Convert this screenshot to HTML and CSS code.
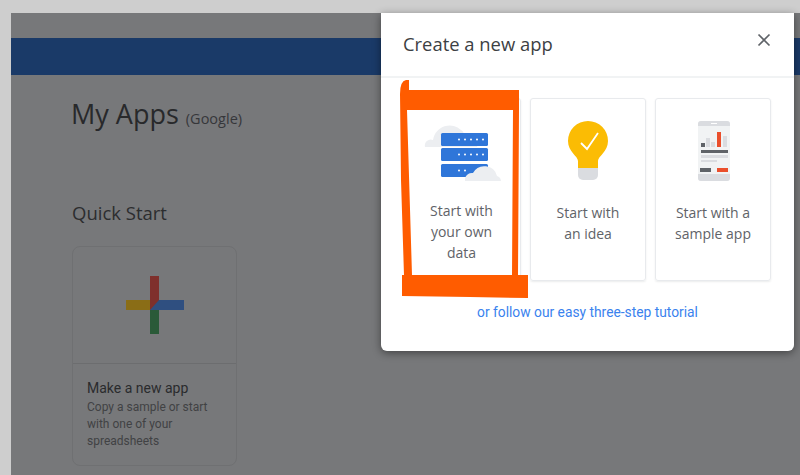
FILE: index.html
```html
<!DOCTYPE html>
<html lang="en">
<head>
  <meta charset="UTF-8" />
  <title>My Apps</title>
  <link rel="stylesheet" href="styles.css">
</head>
<body>
  <div class="app">
    <div class="topgap"></div>
    <div class="band"></div>
    <main class="content">
      <h1 class="page-title">My Apps <small>(Google)</small></h1>
      <h2 class="section-title">Quick Start</h2>
      <div class="new-card">
        <div class="new-card-top">
          <svg width="58" height="58" viewBox="0 0 58 58">
            <rect x="24" y="0" width="9" height="34" fill="#7f302c" />
            <rect x="0" y="24" width="24" height="10" fill="#8a6d16" />
            <rect x="24" y="34" width="9" height="24" fill="#2a5a38" />
            <polygon points="24,34 33,24 58,24 58,34" fill="#2f4f80" />
          </svg>
        </div>
        <div class="new-card-body">
          <div class="new-card-title">Make a new app</div>
          <div class="new-card-text">Copy a sample or start with one of your spreadsheets</div>
        </div>
      </div>
    </main>

    <div class="dialog">
      <div class="dialog-head">
        <span class="dialog-title">Create a new app</span>
        <svg class="close-icon" width="14" height="14" viewBox="0 0 14 14">
          <path d="M1.5 1.5 L12.5 12.5 M12.5 1.5 L1.5 12.5" stroke="#5f6368" stroke-width="1.7" fill="none" />
        </svg>
      </div>
      <div class="options">
        <div class="option option-first">
          <svg class="option-icon" width="80" height="64" viewBox="2 0 80 64">
            <path d="M4 26 a6 6 0 0 1 8 -7 a17 17 0 0 1 32 -5 a9 9 0 0 1 12 12 z" fill="#eceef1" />
            <rect x="20" y="12" width="47" height="13" rx="1.5" fill="#2f76d9" />
            <rect x="20" y="27" width="47" height="13" rx="1.5" fill="#2f76d9" />
            <rect x="20" y="43" width="47" height="13" rx="1.5" fill="#2f76d9" />
            <g fill="#fff">
              <circle cx="38" cy="18.500" r="1" /><circle cx="44" cy="18.500" r="1" /><circle cx="50" cy="18.500" r="1" /><circle cx="56" cy="18.500" r="1" /><circle cx="62" cy="18.500" r="1" />
              <circle cx="38" cy="33.500" r="1" /><circle cx="44" cy="33.500" r="1" /><circle cx="50" cy="33.500" r="1" /><circle cx="56" cy="33.500" r="1" /><circle cx="62" cy="33.500" r="1" />
              <circle cx="38" cy="49.500" r="1" /><circle cx="44" cy="49.500" r="1" />
            </g>
            <path d="M44 60 a7 7 0 0 1 8 -8 a13 13 0 0 1 24 3 a6 6 0 0 1 4 5 z" fill="#eceef1" />
          </svg>
          <div class="option-label">Start with your own data</div>
        </div>
        <div class="option">
          <svg class="option-icon" width="80" height="64" viewBox="0 0 80 64">
            <path d="M30 47 L30 40 C30 35 20 31 20 20 A20 20 0 0 1 60 20 C60 31 50 35 50 40 L50 47 z" fill="#fbbc04" />
            <path d="M30 47 h20 v7 a5 5 0 0 1 -5 5 h-10 a5 5 0 0 1 -5 -5 z" fill="#dadce0" />
            <path d="M33 22 L39 28 L50 12" stroke="#fff" stroke-width="1.800" fill="none" />
          </svg>
          <div class="option-label">Start with an idea</div>
        </div>
        <div class="option">
          <svg class="option-icon" width="80" height="64" viewBox="-1 0 80 64">
            <rect x="24" y="0" width="32" height="60" rx="3" fill="#f1f3f4" />
            <path d="M24 5 v-2 a3 3 0 0 1 3 -3 h26 a3 3 0 0 1 3 3 v2 z M24 53 h32 v4 a3 3 0 0 1 -3 3 h-26 a3 3 0 0 1 -3 -3 z" fill="#dadce0" />
            <rect x="37" y="2" width="6" height="1" fill="#fff" />
            <rect x="27" y="22" width="4" height="4" fill="#5f6368" />
            <rect x="32" y="17" width="4" height="9" fill="#dadce0" />
            <rect x="37" y="21" width="4" height="5" fill="#dadce0" />
            <rect x="43" y="11" width="4" height="15" fill="#ea4f2c" />
            <rect x="49" y="15" width="4" height="11" fill="#dadce0" />
            <rect x="27" y="29" width="27" height="3" fill="#5f6368" />
            <rect x="27" y="34" width="27" height="3" fill="#dadce0" />
            <rect x="27" y="39" width="16" height="2" fill="#dadce0" />
            <rect x="26" y="47" width="11" height="4" fill="#5f6368" />
            <rect x="43" y="47" width="11" height="4" fill="#ea4f2c" />
          </svg>
          <div class="option-label">Start with a sample app</div>
        </div>
      </div>
      <a class="tutorial-link" href="#">or follow our easy three-step tutorial</a>
    </div>

    <svg class="scribble" width="130" height="220" viewBox="0 0 130 220">
      <path d="M0 14 Q0 1 6 0 H9 V10 H119 V30 L118 195 H128 V218 L70 217 L2 216 V195 H4 L1 100 z M7 30 L12 195 L112 195 L113 30 z" fill="#ff5c00" fill-rule="evenodd" />
    </svg>
  </div>
</body>
</html>
```

FILE: styles.css
```css
body {
  margin: 0;
  height: 475px;
  padding: 13px 0 0 11px;
  box-sizing: border-box;
  overflow: hidden;
  background-color: #cecece;
  font-family: "Roboto", sans-serif;
}

.app {
  position: relative;
  height: 462px;
  background-color: #77787a;
}

.topgap {
  height: 25px;
}

.band {
  height: 37px;
  background-color: #1a3a68;
}

.content {
  padding: 23px 0 0 60px;
}

.page-title {
  margin: 0;
  font-family: "Open Sans", sans-serif;
  font-size: 27px;
  font-weight: 400;
  line-height: 32px;
  color: #28292b;
}

.page-title small {
  font-size: 14.5px;
  color: #36373a;
}

.section-title {
  margin: 66px 0 0 1px;
  font-family: "Open Sans", sans-serif;
  font-size: 18.5px;
  font-weight: 400;
  line-height: 24px;
  color: #2c2d2f;
}

.new-card {
  width: 163px;
  height: 218px;
  margin: 21px 0 0 1px;
  border: 1px solid #6f7072;
  border-radius: 8px;
}

.new-card-top {
  display: flex;
  justify-content: center;
  align-items: center;
  height: 116px;
  border-bottom: 1px solid #6c6d6f;
}

.new-card-body {
  padding: 14px 14px 0;
}

.new-card-title {
  font-size: 14px;
  font-weight: 400;
  line-height: 20px;
  color: #2a2b2d;
}

.new-card-text {
  margin-top: 1px;
  font-size: 12px;
  line-height: 17px;
  color: #414244;
}

.dialog {
  position: absolute;
  top: 0;
  left: 370px;
  width: 413px;
  height: 338px;
  border-radius: 0 0 6px 6px;
  background-color: #fff;
  box-shadow: 0 2px 8px rgba(0,0,0,0.45);
}

.dialog-head {
  display: flex;
  justify-content: space-between;
  align-items: center;
  height: 63px;
  padding: 0 23px 0 22px;
  border-bottom: 2px solid #f1f3f4;
}

.dialog-title {
  margin-bottom: 3px;
  font-family: "Open Sans", sans-serif;
  font-size: 18.4px;
  color: #3c4043;
}

.close-icon {
  margin-bottom: 10px;
}

.options {
  display: flex;
  gap: 9px;
  padding: 20px 0 0 24px;
}

.option {
  width: 116px;
  height: 183px;
  box-sizing: border-box;
  padding-top: 22px;
  border: 1px solid #e8eaed;
  border-radius: 3px;
  text-align: center;
  box-shadow: 0 1px 2px rgba(60,64,67,0.1);
}

.option-icon {
  display: block;
  margin: 0 auto;
}

.option-label {
  margin-top: 17px;
  padding: 0 17px;
  font-family: "Open Sans", sans-serif;
  font-size: 14px;
  line-height: 21px;
  color: #5f6368;
}

.option-first .option-label {
  margin-top: 15px;
  padding-right: 20px;
}

.tutorial-link {
  display: block;
  margin-top: 21px;
  text-align: center;
  font-size: 13.8px;
  line-height: 20px;
  color: #3a82ee;
  text-decoration: none;
}

.scribble {
  position: absolute;
  top: 67px;
  left: 389px;
}
```
